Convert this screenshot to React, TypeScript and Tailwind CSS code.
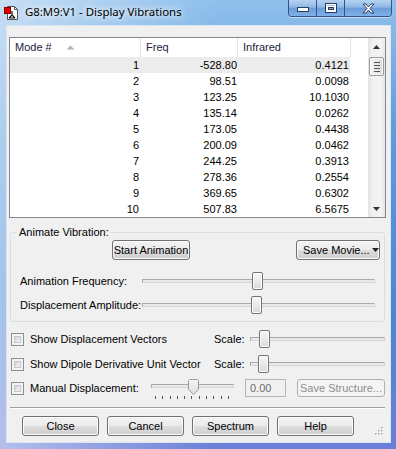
import React from "react";

const rows: [string, string, string][] = [
  ["1", "-528.80", "0.4121"],
  ["2", "98.51", "0.0098"],
  ["3", "123.25", "10.1030"],
  ["4", "135.14", "0.0262"],
  ["5", "173.05", "0.4438"],
  ["6", "200.09", "0.0462"],
  ["7", "244.25", "0.3913"],
  ["8", "278.36", "0.2554"],
  ["9", "369.65", "0.6302"],
  ["10", "507.83", "6.5675"],
];

const btn =
  "h-[20px] flex items-center justify-center rounded-[3px] border border-[#707070] bg-[linear-gradient(#f2f2f2_0%,#ebebeb_50%,#dddddd_50%,#cfcfcf_100%)] shadow-[inset_0_0_0_1px_#fcfcfc] text-black";

const thumb =
  "absolute top-0 h-[18px] w-[11px] rounded-[2px] border border-[#737373] bg-[linear-gradient(#f7f7f7,#e9e9e9_50%,#d9d9d9)] shadow-[inset_0_0_0_1px_#fdfdfd]";

function Track() {
  return <div className="w-full h-[4px] border border-[#d6d6d6] border-t-[#a9a9a9] border-l-[#a9a9a9] bg-[#e7eaea]" />;
}

function Checkbox() {
  return (
    <div className="w-[13px] h-[13px] shrink-0 border border-[#8e8f8f] bg-[#f4f4f4] p-[2px]">
      <div className="w-full h-full border border-[#c4c8cd] bg-[linear-gradient(135deg,#cfd3d8,#f7f7f7)]" />
    </div>
  );
}

function Caption() {
  return (
    <div className="ml-auto mr-[4px] flex h-[17px] rounded-b-[4px] border border-t-0 border-[#31548a] overflow-hidden shadow-[0_1px_0_rgba(255,255,255,0.5)]">
      <div className="w-[28px] h-full border-r border-[#31548a] bg-[linear-gradient(#b5d3f1,#8fb8e6_45%,#6b9bd9_50%,#7eb0e7)] flex items-end justify-center pb-[4px]">
        <svg width="12" height="5" viewBox="0 0 12 5">
          <rect x="0.5" y="0.5" width="11" height="4" fill="#fff" stroke="#2c3e5c" />
        </svg>
      </div>
      <div className="w-[28px] h-full border-r border-[#31548a] bg-[linear-gradient(#b5d3f1,#8fb8e6_45%,#6b9bd9_50%,#7eb0e7)] flex items-center justify-center">
        <svg width="12" height="10" viewBox="0 0 12 10">
          <rect x="0.5" y="0.5" width="11" height="9" fill="none" stroke="#2c3e5c" />
          <rect x="1.5" y="1.5" width="9" height="7" fill="none" stroke="#fff" />
          <rect x="2.5" y="3.5" width="7" height="4" fill="none" stroke="#fff" />
          <rect x="3.5" y="4.5" width="5" height="2" fill="#8aa5c8" stroke="#2c3e5c" />
        </svg>
      </div>
      <div className="w-[46px] h-full bg-[linear-gradient(#b5d3f1,#8fb8e6_45%,#6b9bd9_50%,#7eb0e7)] flex items-center justify-center">
        <svg width="13" height="11" viewBox="0 0 13 11">
          <path d="M1 1h3l2.5 3L9 1h3L8 5.5 12 10H9L6.5 7 4 10H1l4-4.5z" fill="#fff" stroke="#2c3e5c" strokeWidth="1" strokeLinejoin="round" />
        </svg>
      </div>
    </div>
  );
}

function AppIcon() {
  return (
    <svg width="16" height="16" viewBox="0 0 16 16" className="ml-[4px] mt-[5px] shrink-0">
      <path d="M3.5 1.5h7l3 3v10h-10z" fill="#fff" stroke="#555" />
      <path d="M10.5 1.5v3h3" fill="none" stroke="#555" />
      <path d="M8 6v4M8 10l-3 3M8 10l3 3M5 13h6" stroke="#111" strokeWidth="1.2" fill="none" />
      <rect x="0.5" y="2.5" width="6" height="6" fill="#e00000" stroke="#8a0000" />
    </svg>
  );
}

export default function App() {
  return (
    <div className="relative w-[396px] h-[449px] overflow-hidden font-['Liberation_Sans',sans-serif] text-[11px] bg-[linear-gradient(90deg,rgba(255,255,255,0.5),rgba(255,255,255,0)_55%),linear-gradient(180deg,#8fc0ec,#5e9bdc_30%,#4a86d4_70%,#6a7fd8)]">
      {/* title bar */}
      <div className="h-[25px] flex items-start">
        <AppIcon />
        <span className="ml-[5px] mt-[4px] font-['Noto_Sans',sans-serif] text-[11.4px] leading-[16px] text-black [text-shadow:0_0_6px_#fff,0_0_10px_#fff]">
          G8:M9:V1 - Display Vibrations
        </span>
        <Caption />
      </div>

      {/* client area */}
      <div className="relative ml-[6px] w-[385px] h-[418px] border border-[#dbe6f3] bg-[#f0f0f0] flex flex-col">
        {/* list view */}
        <div className="ml-[2px] mt-[11px] w-[377px] h-[181px] border border-[#828790] bg-white flex">
          <div className="flex flex-col w-[358px]">
            <div className="h-[19px] flex text-[#1a2440]">
              <div className="w-[131px] border-r border-[#e3e5e8] pl-[5px] flex items-center">
                <span>Mode #</span>
                <svg width="9" height="5" viewBox="0 0 9 5" className="ml-[14px]">
                  <path d="M0.5 4.5L4.5 0.5L8.5 4.5z" fill="#b5b5b5" />
                </svg>
              </div>
              <div className="w-[97px] border-r border-[#e3e5e8] pl-[5px] flex items-center">Freq</div>
              <div className="w-[113px] border-r border-[#e3e5e8] pl-[5px] flex items-center">Infrared</div>
              <div className="flex-1" />
            </div>
            {rows.map((r, i) => (
              <div key={r[0]} className={`h-[16px] w-[340px] flex items-center text-black ${i === 0 ? "bg-[#ececec]" : ""}`}>
                <div className="w-[131px] text-right pr-[2px]">{r[0]}</div>
                <div className="w-[97px] text-right pr-[1px]">{r[1]}</div>
                <div className="w-[112px] text-right pr-[1px]">{r[2]}</div>
              </div>
            ))}
          </div>
          {/* scrollbar */}
          <div className="w-[17px] flex flex-col bg-[linear-gradient(90deg,#e2e2e2,#f0f0f0_25%,#f3f3f3_75%,#e6e6e6)]">
            <div className="h-[17px] flex items-center justify-center">
              <svg width="7" height="4" viewBox="0 0 7 4">
                <path d="M0 4L3.5 0L7 4z" fill="#333" />
              </svg>
            </div>
            <div className="mx-[1px] mt-[2px] h-[19px] rounded-[2px] border border-[#989898] bg-[linear-gradient(90deg,#f4f4f4,#e9e9e9_50%,#dadada)] shadow-[inset_0_0_0_1px_#fafafa] flex flex-col items-center justify-center gap-[2px]">
              <div className="w-[6px] h-[1px] bg-[#555]" />
              <div className="w-[6px] h-[1px] bg-[#555]" />
              <div className="w-[6px] h-[1px] bg-[#555]" />
              <div className="w-[6px] h-[1px] bg-[#555]" />
            </div>
            <div className="flex-1" />
            <div className="h-[17px] flex items-center justify-center">
              <svg width="7" height="4" viewBox="0 0 7 4">
                <path d="M0 0L3.5 4L7 0z" fill="#333" />
              </svg>
            </div>
          </div>
        </div>

        {/* Animate vibration group */}
        <div className="relative ml-[3px] mt-[14px] w-[375px] h-[90px] border border-[#d5dfe5] rounded-[3px] flex flex-col">
          <span className="absolute left-[6px] -top-[7px] px-[2px] bg-[#f0f0f0] leading-[13px] text-black">Animate Vibration:</span>
          <div className="mt-[7px] flex">
            <div className={`${btn} ml-[101px] w-[78px]`}>Start Animation</div>
            <div className={`${btn} ml-auto mr-[4px] w-[84px] !justify-start pl-[6px]`}>
              <span>Save Movie...</span>
              <svg width="7" height="4" viewBox="0 0 7 4" className="ml-[2px]">
                <path d="M0 0L3.5 4L7 0z" fill="#222" />
              </svg>
            </div>
          </div>
          <div className="mt-[12px] h-[18px] flex items-center">
            <span className="w-[131px] pl-[9px] text-black">Animation Frequency:</span>
            <div className="relative w-[233px] h-[18px] flex items-center">
              <Track />
              <div className={`${thumb} left-[110px]`} />
            </div>
          </div>
          <div className="mt-[6px] h-[18px] flex items-center">
            <span className="w-[131px] pl-[9px] text-black">Displacement Amplitude:</span>
            <div className="relative w-[233px] h-[18px] flex items-center">
              <Track />
              <div className={`${thumb} left-[109px]`} />
            </div>
          </div>
        </div>

        {/* checkbox rows */}
        <div className="mt-[8px] h-[18px] flex items-center pl-[4px]">
          <Checkbox />
          <span className="ml-[6px] w-[184px] text-black">Show Displacement Vectors</span>
          <span className="w-[36px] text-black">Scale:</span>
          <div className="relative w-[135px] h-[18px] flex items-center">
            <Track />
            <div className={`${thumb} left-[9px]`} />
          </div>
        </div>
        <div className="mt-[7px] h-[18px] flex items-center pl-[4px]">
          <Checkbox />
          <span className="ml-[6px] w-[184px] text-black">Show Dipole Derivative Unit Vector</span>
          <span className="w-[36px] text-black">Scale:</span>
          <div className="relative w-[135px] h-[18px] flex items-center">
            <Track />
            <div className={`${thumb} left-[8px] border-[#5a5a5a] bg-[linear-gradient(#eeeeee,#dedede_50%,#cccccc)]`} />
          </div>
        </div>
        <div className="mt-[6px] h-[18px] flex items-center pl-[4px]">
          <Checkbox />
          <span className="ml-[6px] w-[121px] text-black">Manual Displacement:</span>
          <div className="relative w-[83px] h-[18px]">
            <div className="absolute left-0 right-0 top-[5px]">
              <Track />
            </div>
            <svg width="11" height="16" viewBox="0 0 11 16" className="absolute left-[37px] top-0">
              <defs>
                <linearGradient id="tg" x1="0" y1="0" x2="0" y2="1">
                  <stop offset="0" stopColor="#f7f7f7" />
                  <stop offset="1" stopColor="#dcdcdc" />
                </linearGradient>
              </defs>
              <path d="M1.5 0.5h8l1 1v9l-5 5h0l-5-5v-9z" fill="url(#tg)" stroke="#9a9a9a" />
            </svg>
            <div className="absolute left-[4px] top-[17px] flex gap-[6.3px]">
              {Array.from({ length: 11 }).map((_, i) => (
                <div key={i} className="w-[1px] h-[3px] bg-[#555]" />
              ))}
            </div>
          </div>
          <div className="ml-[11px] w-[41px] h-[18px] border border-[#b5b5b5] bg-[#f0f0f0] text-[#6d6d6d] pl-[4px] flex items-center">0.00</div>
          <div className="ml-[11px] w-[88px] h-[18px] rounded-[3px] border border-[#adb2b5] bg-[#f4f4f4] text-[#8d8d8d] flex items-center justify-center">
            Save Structure...
          </div>
        </div>

        {/* separator */}
        <div className="ml-[3px] mt-[10px] w-[375px] h-[2px] border-t border-[#a0a0a0] border-b border-b-white" />

        {/* bottom buttons */}
        <div className="mt-[7px] ml-[15px] flex gap-[8px]">
          <div className={`${btn} w-[77px]`}>Close</div>
          <div className={`${btn} w-[77px]`}>Cancel</div>
          <div className={`${btn} w-[77px]`}>Spectrum</div>
          <div className={`${btn} w-[77px]`}>Help</div>
        </div>

        {/* size grip */}
        <svg width="10" height="10" viewBox="0 0 10 10" className="absolute right-[6px] bottom-[6px]">
          {[
            [7, 1],
            [4, 4],
            [7, 4],
            [1, 7],
            [4, 7],
            [7, 7],
          ].map(([x, y]) => (
            <g key={`${x}-${y}`}>
              <rect x={x + 1} y={y + 1} width="1.5" height="1.5" fill="#fff" />
              <rect x={x} y={y} width="1.5" height="1.5" fill="#a5a5a5" />
            </g>
          ))}
        </svg>
      </div>
    </div>
  );
}
